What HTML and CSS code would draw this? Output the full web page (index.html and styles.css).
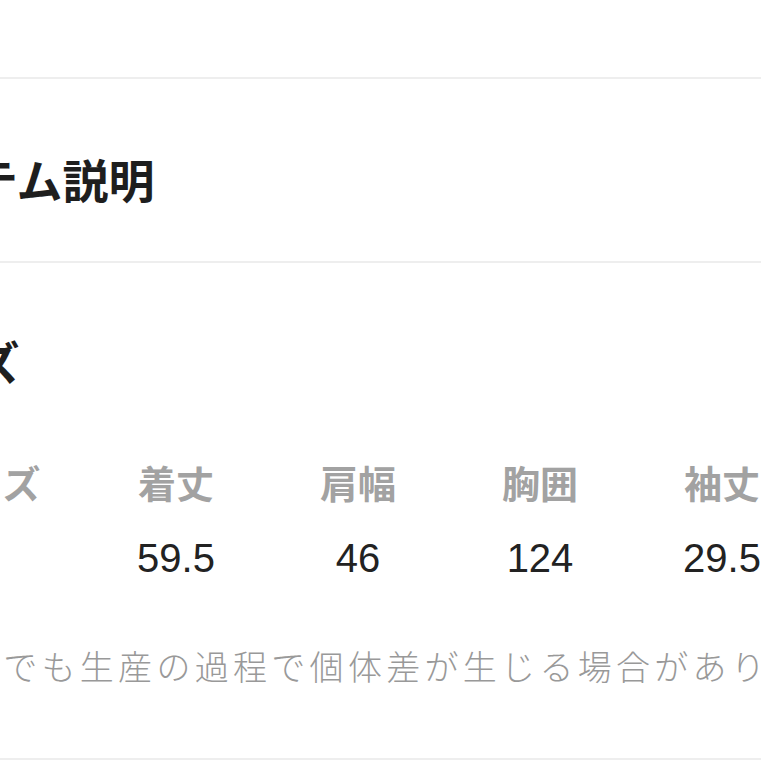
FILE: index.html
```html
<!DOCTYPE html>
<html lang="ja">
<head>
    <meta charset="utf-8">
    <meta name="viewport" content="width=device-width, initial-scale=1">
    <title>アイテム説明</title>
    <link rel="stylesheet" href="styles.css">
</head>

<body>
    <main class="page">
        <div class="top-space"></div>

        <section class="block block-desc">
            <h2 class="block-title">アイテム説明</h2>
        </section>

        <section class="block block-size">
            <h2 class="block-title">サイズ</h2>

            <div class="size-table">
                <div class="size-head">サイズ</div>
                <div class="size-head">着丈</div>
                <div class="size-head">肩幅</div>
                <div class="size-head">胸囲</div>
                <div class="size-head">袖丈</div>

                <div class="size-val">F</div>
                <div class="size-val">59.5</div>
                <div class="size-val">46</div>
                <div class="size-val">124</div>
                <div class="size-val">29.5</div>
            </div>

            <p class="size-note">同じ商品でも生産の過程で個体差が生じる場合があります。</p>
        </section>
    </main>
</body>
</html>
```

FILE: styles.css
```css
body, html {
    margin: 0;
    padding: 0;
    background: #fff;
    overflow: hidden;}

.page {
    margin-left: -117px; /* 左側が切れている */
    width: 1000px;
    font-family: "Noto Sans CJK JP", "Noto Sans", sans-serif;
    color: #222;}

.top-space {
    height: 77px;
    border-bottom: 2px solid #eeeeee;}

.block {
    border-bottom: 2px solid #eeeeee;}

.block-desc {
    padding: 76px 0 60px;}

.block-size {
    padding: 74px 0 76px;}

.block-title {
    margin: 0;
    font-size: 46px;
    line-height: 1;
    font-weight: 700;
    color: #1e1e1e;}

.size-table {
    display: grid;
    grid-template-columns: 202px repeat(4, 182px);
    row-gap: 37px;
    margin-top: 80px;
    text-align: center;}

.size-head {
    font-size: 38px;
    line-height: 1;
    font-weight: 700;
    color: #a2a2a2;}

.size-val {
    font-family: "Liberation Sans", Arial, sans-serif;
    font-size: 40px;
    line-height: 1;
    color: #222;}

.size-note {
    margin: 72px 0 0 -33px;
    height: 32px;
    font-size: 34px;
    line-height: 32px;
    font-weight: 300;
    letter-spacing: 4.3px;
    white-space: nowrap;
    color: #999;}
```
